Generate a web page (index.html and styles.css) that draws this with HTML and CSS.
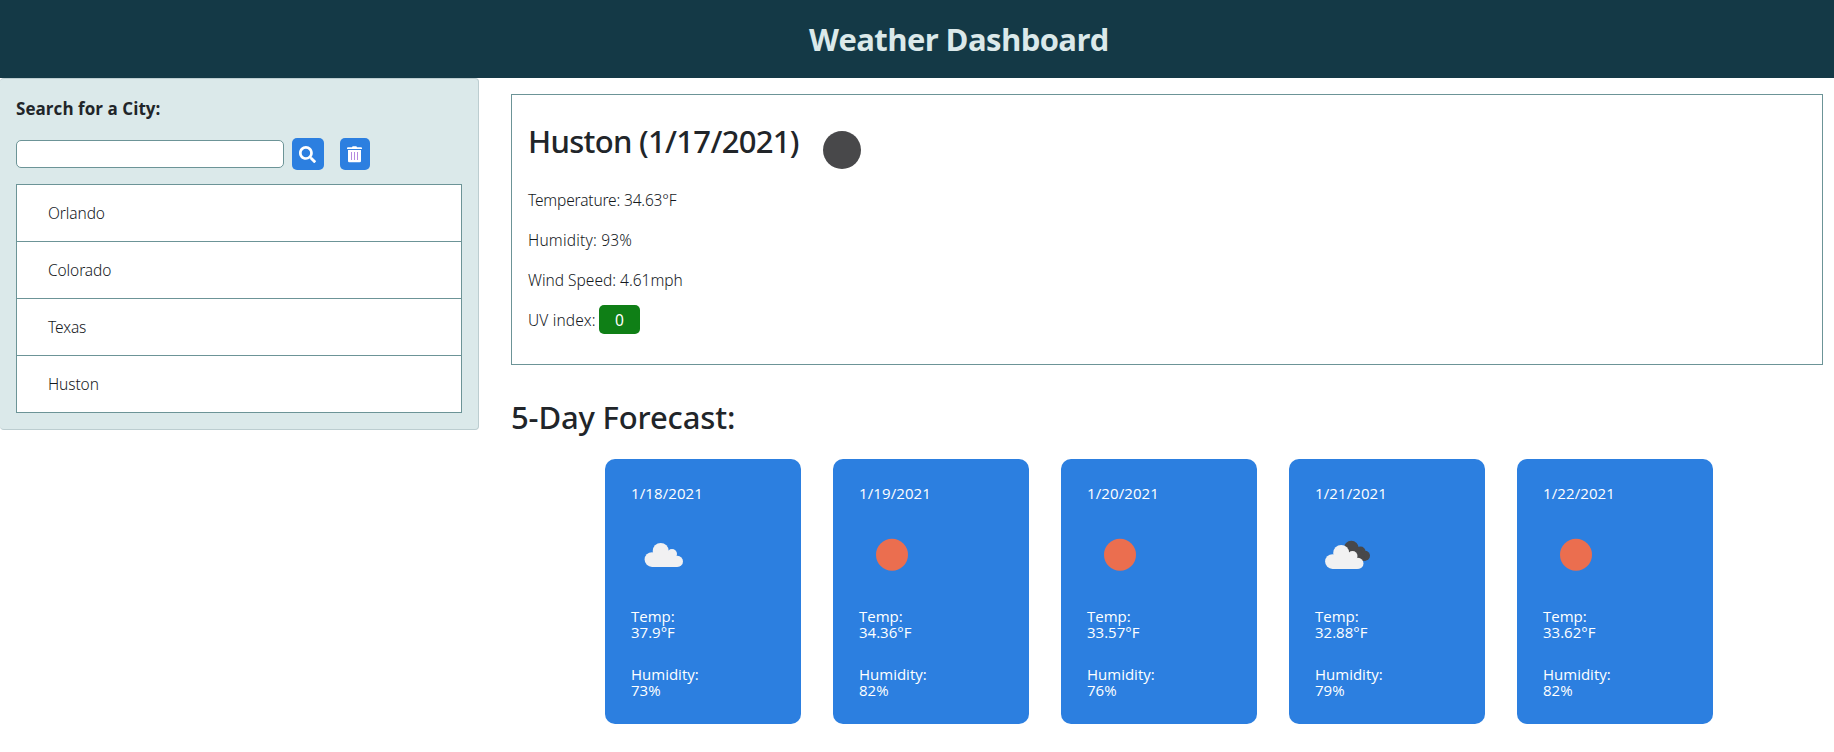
FILE: index.html
```html
<!DOCTYPE html>
<html lang="en">
<head>
<meta charset="utf-8">
<title>Weather Dashboard</title>
<link rel="stylesheet" href="styles.css">
</head>
<body>
<svg class="defs" aria-hidden="true">
  <symbol id="cloud" viewBox="0 0 66 66">
    <circle cx="21" cy="37.6" r="7.4"/><circle cx="29.7" cy="29" r="8"/><circle cx="41" cy="32" r="5"/><circle cx="46.4" cy="39.4" r="5.6"/><path d="M21 32h20l5 5v8H21z"/>
  </symbol>
  <symbol id="sun" viewBox="0 0 66 66"><circle cx="33" cy="32.8" r="16"/></symbol>
</svg>
<header class="header"><h1 class="brand">Weather Dashboard</h1></header>
<div class="layout">
  <aside class="sidebar">
    <h2 class="search-title">Search for a City:</h2>
    <div class="search-row">
      <input class="search-input" type="text" aria-label="City">
      <button class="btn btn-search" aria-label="Search"><svg width="17" height="17" viewBox="0 0 512 512"><path fill="#fff" d="M505 442.700 405.300 343c-4.500-4.500-10.600-7-17-7H372c27.600-35.300 44-79.700 44-128C416 93.100 322.900 0 208 0S0 93.100 0 208s93.100 208 208 208c48.300 0 92.700-16.400 128-44v16.300c0 6.400 2.500 12.500 7 17l99.700 99.700c9.400 9.400 24.600 9.400 33.900 0l28.300-28.300c9.400-9.400 9.400-24.600.1-34zM208 336c-70.700 0-128-57.200-128-128 0-70.700 57.200-128 128-128 70.700 0 128 57.200 128 128 0 70.700-57.200 128-128 128z"/></svg></button>
      <button class="btn btn-clear" aria-label="Clear"><svg width="15" height="17" viewBox="0 0 15 17"><path fill="#fff" d="M0 2.200Q0 1.200 1 1.200h4L5.600.300h3.800l.6.900h4q1 0 1 1v.8H0z"/><path fill="#fff" d="M1 4h13v11q0 1.300-1.300 1.300H2.300Q1 16.300 1 15z"/><path stroke="#b58be0" stroke-width="1" d="M4.500 6v8M7.500 6v8M10.500 6v8"/></svg></button>
    </div>
    <ul class="cities">
      <li class="city">Orlando</li>
      <li class="city">Colorado</li>
      <li class="city">Texas</li>
      <li class="city">Huston</li>
    </ul>
  </aside>
  <main class="main">
    <section class="current">
      <div class="current-head"><h2 class="title city-title">Huston (1/17/2021)</h2><svg class="current-icon" viewBox="0 0 40 40"><circle cx="20" cy="20" r="19" fill="#48484a"/></svg></div>
      <p class="stat temperature">Temperature: 34.63°F</p>
      <p class="stat humidity">Humidity: 93%</p>
      <p class="stat">Wind Speed: 4.61mph</p>
      <p class="stat uv"><span>UV index:</span><b class="badge">0</b></p>
    </section>
    <h2 class="title forecast-title">5-Day Forecast:</h2>
    <div class="forecast">
      <article class="day"><p class="date">1/18/2021</p><svg class="icon cloud"><use href="#cloud"/></svg><p>Temp:<br>37.9°F</p><p class="hum">Humidity:<br>73%</p></article>
      <article class="day"><p class="date">1/19/2021</p><svg class="icon sun"><use href="#sun"/></svg><p>Temp:<br>34.36°F</p><p class="hum">Humidity:<br>82%</p></article>
      <article class="day"><p class="date">1/20/2021</p><svg class="icon sun"><use href="#sun"/></svg><p>Temp:<br>33.57°F</p><p class="hum">Humidity:<br>76%</p></article>
      <article class="day"><p class="date">1/21/2021</p><svg class="icon" viewBox="0 0 66 66"><g fill="#48484a"><circle cx="36.3" cy="26.200" r="7.500"/><circle cx="45.500" cy="29.500" r="5"/><circle cx="50" cy="33.800" r="5"/><path d="M36 26h9l6 12.500-4 .5-11-4z"/></g><use class="cloud" href="#cloud" x="-3.500" y="2" width="66" height="66"/></svg><p>Temp:<br>32.88°F</p><p class="hum">Humidity:<br>79%</p></article>
      <article class="day"><p class="date">1/22/2021</p><svg class="icon sun"><use href="#sun"/></svg><p>Temp:<br>33.62°F</p><p class="hum">Humidity:<br>82%</p></article>
    </div>
  </main>
</div>
</body>
</html>
```
FILE: styles.css
```css
* { box-sizing: border-box; }
body { margin: 0; background: #fff; color: #212529; font-family: "Noto Sans", "Open Sans", sans-serif; font-size: 15.5px; line-height: 24px; }
h1, h2, p, ul { margin: 0; padding: 0; }
.defs { display: none; }
.header { height: 78px; padding: 19px 0 0 84px; background: #143946; text-align: center; }
.brand { font-family: "Open Sans", sans-serif; font-size: 31px; line-height: 40px; font-weight: 700; letter-spacing: -0.6px; color: #dbe9ea; }
.layout { display: flex; align-items: flex-start; }
.sidebar { width: 479px; padding: 18px 16px 16px; border: 1px solid #bccdd0; border-left: 0; border-radius: 4px; background: #dbe9ea; }
.search-title { font-family: "Open Sans", sans-serif; font-size: 17px; font-weight: 700; line-height: 24px; letter-spacing: 0.05px; }
.search-row { display: flex; align-items: center; margin-top: 17px; height: 32px; }
.search-input { width: 268px; height: 28px; border: 1px solid #6c9497; border-radius: 5px; background: #fff; }
.btn { display: flex; align-items: center; justify-content: center; height: 32px; padding: 0; border: 0; border-radius: 5px; background: #2c7fe0; }
.btn-search { width: 32px; margin-left: 8px; padding-right: 1px; }
.btn-clear { width: 30px; margin-left: 16px; padding-right: 1px; }
.cities { list-style: none; margin-top: 14px; }
.city { height: 58px; padding: 16px 31px; border: 1px solid #6c9497; background: #fff; color: #15191d; font-weight: 300; letter-spacing: -0.1px; }
.city + .city { margin-top: -1px; }
.main { flex: 1; padding: 16px 11px 0 32px; }
.current { height: 271px; padding: 26px 16px; border: 1px solid #6c9497; }
.current-head { display: flex; align-items: flex-start; height: 67px; }
.title { font-size: 31px; line-height: 40px; font-weight: 500; }
.city-title { width: 294px; letter-spacing: -0.7px; white-space: nowrap; }
.current-icon { width: 40px; height: 40px; margin-top: 9px; }
.stat { height: 24px; margin-bottom: 16px; color: #15191d; font-weight: 300; }
.temperature { letter-spacing: -0.17px; }
.humidity { letter-spacing: 0.2px; }
.uv { display: flex; align-items: center; letter-spacing: 0.15px; }
.uv span { width: 71px; }
.badge { width: 41px; height: 29px; margin-top: -2px; border-radius: 5px; background: #0f7f16; color: #fff; font-weight: 400; line-height: 30px; text-align: center; }
.forecast-title { margin-top: 32px; letter-spacing: -0.15px; }
.forecast { display: flex; gap: 32px; padding-left: 94px; margin-top: 22px; }
.day { width: 196px; height: 265px; padding: 26px; border-radius: 10px; background: #2c7fe0; color: #fff; font-family: "Open Sans", sans-serif; font-size: 15px; line-height: 16px; }
.date { letter-spacing: 0.1px; }
.icon { display: block; width: 66px; height: 66px; margin: 21px 0 20px; }
.cloud { fill: #f1f1f2; }
.sun { fill: #eb6e4f; }
.hum { margin-top: 26px; }
```
